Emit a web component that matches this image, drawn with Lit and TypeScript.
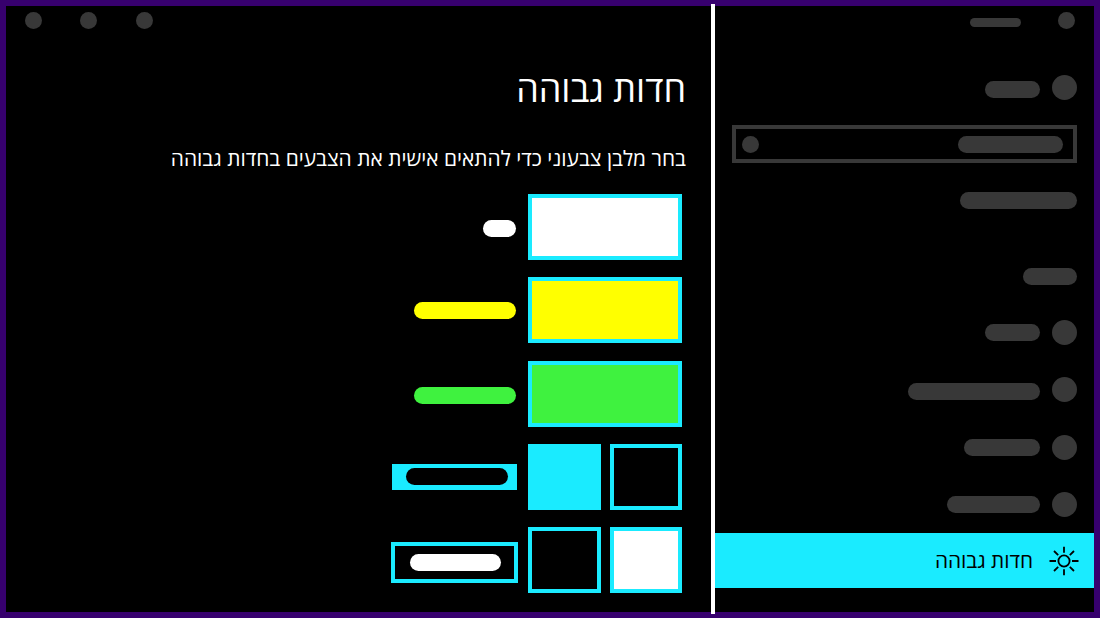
import { LitElement, html, css } from "lit";
import { customElement } from "lit/decorators.js";

const rows = [
  { w: 55, top: 4.3 },
  { w: 132.5, top: 5.7 },
  { w: 76, top: 4.8 },
  { w: 93, top: 4.3 },
];

@customElement("app-root")
export class AppRoot extends LitElement {
  static styles = css`
    :host { display: block; width: 1100px; height: 618px; }
    * { box-sizing: border-box; }
    .frame {
      width: 1100px; height: 618px; background: #000; border: 6px solid #37006e;
      display: flex; font-family: "Open Sans", "Liberation Sans", sans-serif; color: #fff;
    }
    .main { width: 705px; flex: none; padding: 6.3px 29px 0 19px; }
    .dots { display: flex; gap: 38.3px; }
    .dot { width: 17px; height: 17px; border-radius: 50%; background: #383838; flex: none; }
    .text { direction: rtl; margin-right: -4px; }
    h1 { margin: 35px 0 0; font-size: 36px; line-height: 50px; font-weight: 400; }
    p { margin: 29px 0 0; font-size: 20.9px; line-height: 30px; font-weight: 400; }
    .themes { direction: rtl; display: flex; flex-direction: column; gap: 17.3px; margin-top: 20.7px; }
    .theme { display: flex; height: 66px; gap: 12px; align-items: flex-start; }
    .swatches { width: 154px; flex: none; height: 66px; display: flex; gap: 9px; }
    .sw { flex: 1; border: 4px solid #1aebff; }
    .white { background: #fff; }
    .yellow { background: #ff0; }
    .green { background: #3ff23f; }
    .cyan { background: #1aebff; }
    .pill { height: 17px; border-radius: 9px; }
    .l1 { width: 33.5px; background: #fff; margin-top: 26.5px; }
    .l2 { width: 102px; background: #ff0; margin-top: 25px; }
    .l3 { width: 102px; background: #3ff23f; margin-top: 26px; }
    .l4 {
      width: 124.5px; height: 26px; margin: 20px -0.5px 0 0; background: #1aebff;
      display: flex; padding: 4.5px 8.5px 0 0;
    }
    .l4 i { display: block; width: 102.5px; height: 17px; border-radius: 9px; background: #000; }
    .l5 {
      width: 126.5px; height: 41px; margin: 14.5px -1.5px 0 0; border: 4px solid #1aebff;
      padding: 8px 12.5px 0 0;
    }
    .l5 i { display: block; width: 91.5px; height: 17px; border-radius: 9px; background: #fff; }
    .divider { width: 4px; flex: none; margin: -2px 0; background: #fff; }
    .side { flex: 1; min-width: 0; direction: rtl; display: flex; flex-direction: column; }
    .bar { height: 17px; border-radius: 9px; background: #383838; flex: none; }
    .head { display: flex; align-items: center; height: 17px; margin-top: 6px; padding-right: 19px; gap: 37px; }
    .head .bar { width: 51px; height: 9px; border-radius: 5px; margin-top: 3px; }
    .item { display: flex; gap: 12px; padding: 0 17px; height: 25px; align-items: flex-start; }
    .big { width: 25px; height: 25px; border-radius: 50%; background: #383838; flex: none; }
    .first { margin-top: 46px; }
    .first .bar { margin-top: 6px; }
    .search {
      margin: 25px 17px 0; height: 38px; border: 4px solid #383838;
      display: flex; align-items: center; justify-content: space-between; padding: 0 10px 0 6px;
    }
    .search .bar { width: 105px; }
    .plain { margin: 29px 17px 0 0; width: 117px; }
    .cat { margin: 59px 17px 0 0; width: 54.5px; }
    .list { display: flex; flex-direction: column; gap: 32.3px; margin-top: 35px; }
    .nav {
      margin-top: 16.5px; height: 54.5px; background: #1aebff; color: #000;
      display: flex; align-items: center; gap: 16px; padding-right: 15px; font-size: 20.8px;
    }
    .nav span { margin-top: -2px; }
    .nav svg { flex: none; display: block; }
  `;

  render() {
    return html`<div class="frame">
      <section class="main">
        <div class="dots"><span class="dot"></span><span class="dot"></span><span class="dot"></span></div>
        <div class="text">
          <h1>חדות גבוהה</h1>
          <p>בחר מלבן צבעוני כדי להתאים אישית את הצבעים בחדות גבוהה</p>
        </div>
        <div class="themes">
          <div class="theme">
            <div class="swatches"><div class="sw white"></div></div>
            <div class="pill l1"></div>
          </div>
          <div class="theme">
            <div class="swatches"><div class="sw yellow"></div></div>
            <div class="pill l2"></div>
          </div>
          <div class="theme">
            <div class="swatches"><div class="sw green"></div></div>
            <div class="pill l3"></div>
          </div>
          <div class="theme">
            <div class="swatches"><div class="sw"></div><div class="sw cyan"></div></div>
            <div class="l4"><i></i></div>
          </div>
          <div class="theme">
            <div class="swatches"><div class="sw white"></div><div class="sw"></div></div>
            <div class="l5"><i></i></div>
          </div>
        </div>
      </section>
      <div class="divider"></div>
      <aside class="side">
        <div class="head"><span class="dot"></span><span class="bar"></span></div>
        <div class="item first"><span class="big"></span><span class="bar" style="width:55px"></span></div>
        <div class="search"><span class="bar"></span><span class="dot"></span></div>
        <div class="bar plain"></div>
        <div class="bar cat"></div>
        <div class="list">
          ${rows.map(
            (r) => html`<div class="item">
              <span class="big"></span>
              <span class="bar" style="width:${r.w}px;margin-top:${r.top}px"></span>
            </div>`
          )}
        </div>
        <div class="nav">
          <svg width="30" height="30" viewBox="-15 -15 30 30" fill="none" stroke="#000" stroke-width="1.8">
            <circle r="5.6"></circle>
            <path d="M0-14.3V-8.3M0 8.3V14.3M-14.5 0H-8M8 0H14.5M-10-10L-5.8-5.8M10-10L5.8-5.8M-10 10L-5.8 5.8M10 10L5.8 5.8"></path>
          </svg>
          <span>חדות גבוהה</span>
        </div>
      </aside>
    </div>`;
  }
}
